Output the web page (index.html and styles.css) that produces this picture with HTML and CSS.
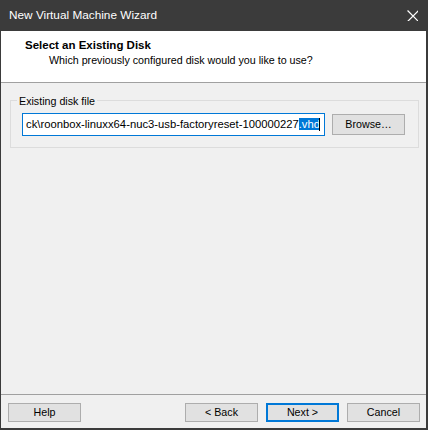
FILE: index.html
```html
<!DOCTYPE html>
<html>
<head>
<meta charset="utf-8">
<title>New Virtual Machine Wizard</title>
<link rel="stylesheet" href="styles.css">
</head>
<body>
<div class="window">
  <div class="titlebar">
    <span class="title">New Virtual Machine Wizard</span>
    <svg class="close" viewBox="0 0 10 10" width="11" height="11"><path d="M0.5 0.5 L10.5 10.5 M10.5 0.5 L0.5 10.5" stroke="#fff" stroke-width="1.1" fill="none"/></svg>
  </div>
  <div class="frame">
    <div class="header">
      <div class="heading">Select an Existing Disk</div>
      <div class="subheading">Which previously configured disk would you like to use?</div>
    </div>
    <div class="content">
      <fieldset class="group">
        <legend class="group-label">Existing disk file</legend>
        <div class="row">
          <div class="textbox"><span class="value">ck\roonbox-linuxx64-nuc3-usb-factoryreset-100000227<span class="sel">.vhd</span><span class="caret"></span></span></div>
          <button class="btn browse">Browse…</button>
        </div>
      </fieldset>
    </div>
    <div class="footer">
      <button class="btn">Help</button>
      <button class="btn push">&lt; Back</button>
      <button class="btn default">Next &gt;</button>
      <button class="btn">Cancel</button>
    </div>
  </div>
</div>
</body>
</html>
```
FILE: styles.css
```css
html, body {
  margin: 0;
  padding: 0;
}
body {
  width: 428px;
  height: 430px;
  overflow: hidden;
  font-family: "Liberation Sans", Arial, sans-serif;
  font-size: 10.7px;
  color: #000;
}
.window {
  display: flex;
  flex-direction: column;
  height: 430px;
  background: #f0f0f0;
}
.titlebar {
  flex: none;
  height: 31px;
  background: #3b3b3b;
  color: #fff;
  display: flex;
  align-items: center;
  padding: 0 10px 0 9px;
  font-size: 11.8px;
}
.title {
  flex: 1;
  line-height: 15px;
}
.close {
  display: block;
}
.frame {
  flex: 1;
  min-height: 0;
  display: flex;
  flex-direction: column;
  border-style: solid;
  border-color: #3b3b3b;
  border-width: 0 2px 2px 1px;
}
.header {
  flex: none;
  box-sizing: border-box;
  height: 52px;
  background: #fff;
  border-bottom: 1px solid #a0a0a0;
  padding: 7px 0 0 24px;
}
.heading {
  font-weight: bold;
  font-size: 11.5px;
  line-height: 15px;
}
.subheading {
  line-height: 15px;
  padding-left: 24px;
}
.content {
  flex: 1;
  padding: 9px 7px 0 9px;
}
.group {
  margin: 0;
  padding: 0;
  border: 1px solid #dcdcdc;
}
.group-label {
  margin-left: 6px;
  padding: 2px 2px 0 2px;
  line-height: 15px;
}
.row {
  display: flex;
  align-items: center;
  gap: 7px;
  padding: 4px 0 11px 11px;
}
.textbox {
  box-sizing: border-box;
  width: 303px;
  height: 23px;
  border: 1px solid #0078d7;
  background: #fff;
  display: flex;
  justify-content: flex-end;
  align-items: center;
  overflow: hidden;
  padding: 0 4px 0 4px;
  white-space: nowrap;
  font-size: 11.25px;
  line-height: 13px;
}
.value {
  flex: none;
}
.sel {
  background: #0078d7;
  color: #fff;
}
.caret {
  display: inline-block;
  width: 1px;
  height: 13px;
  margin-left: -1px;
  background: #000;
  vertical-align: top;
}
.btn {
  box-sizing: border-box;
  width: 73px;
  height: 19px;
  margin: 0;
  padding: 0;
  background: #e1e1e1;
  border: 1px solid #adadad;
  font: inherit;
  color: #000;
  line-height: 15px;
}
.browse {
  height: 21px;
}
.footer {
  flex: none;
  box-sizing: border-box;
  height: 34px;
  border-top: 1px solid #a0a0a0;
  padding: 8px 6px 0 7px;
  display: flex;
  align-items: flex-start;
  gap: 8px;
}
.push {
  margin-left: auto;
}
.default {
  border: 2px solid #0078d7;
}
```
